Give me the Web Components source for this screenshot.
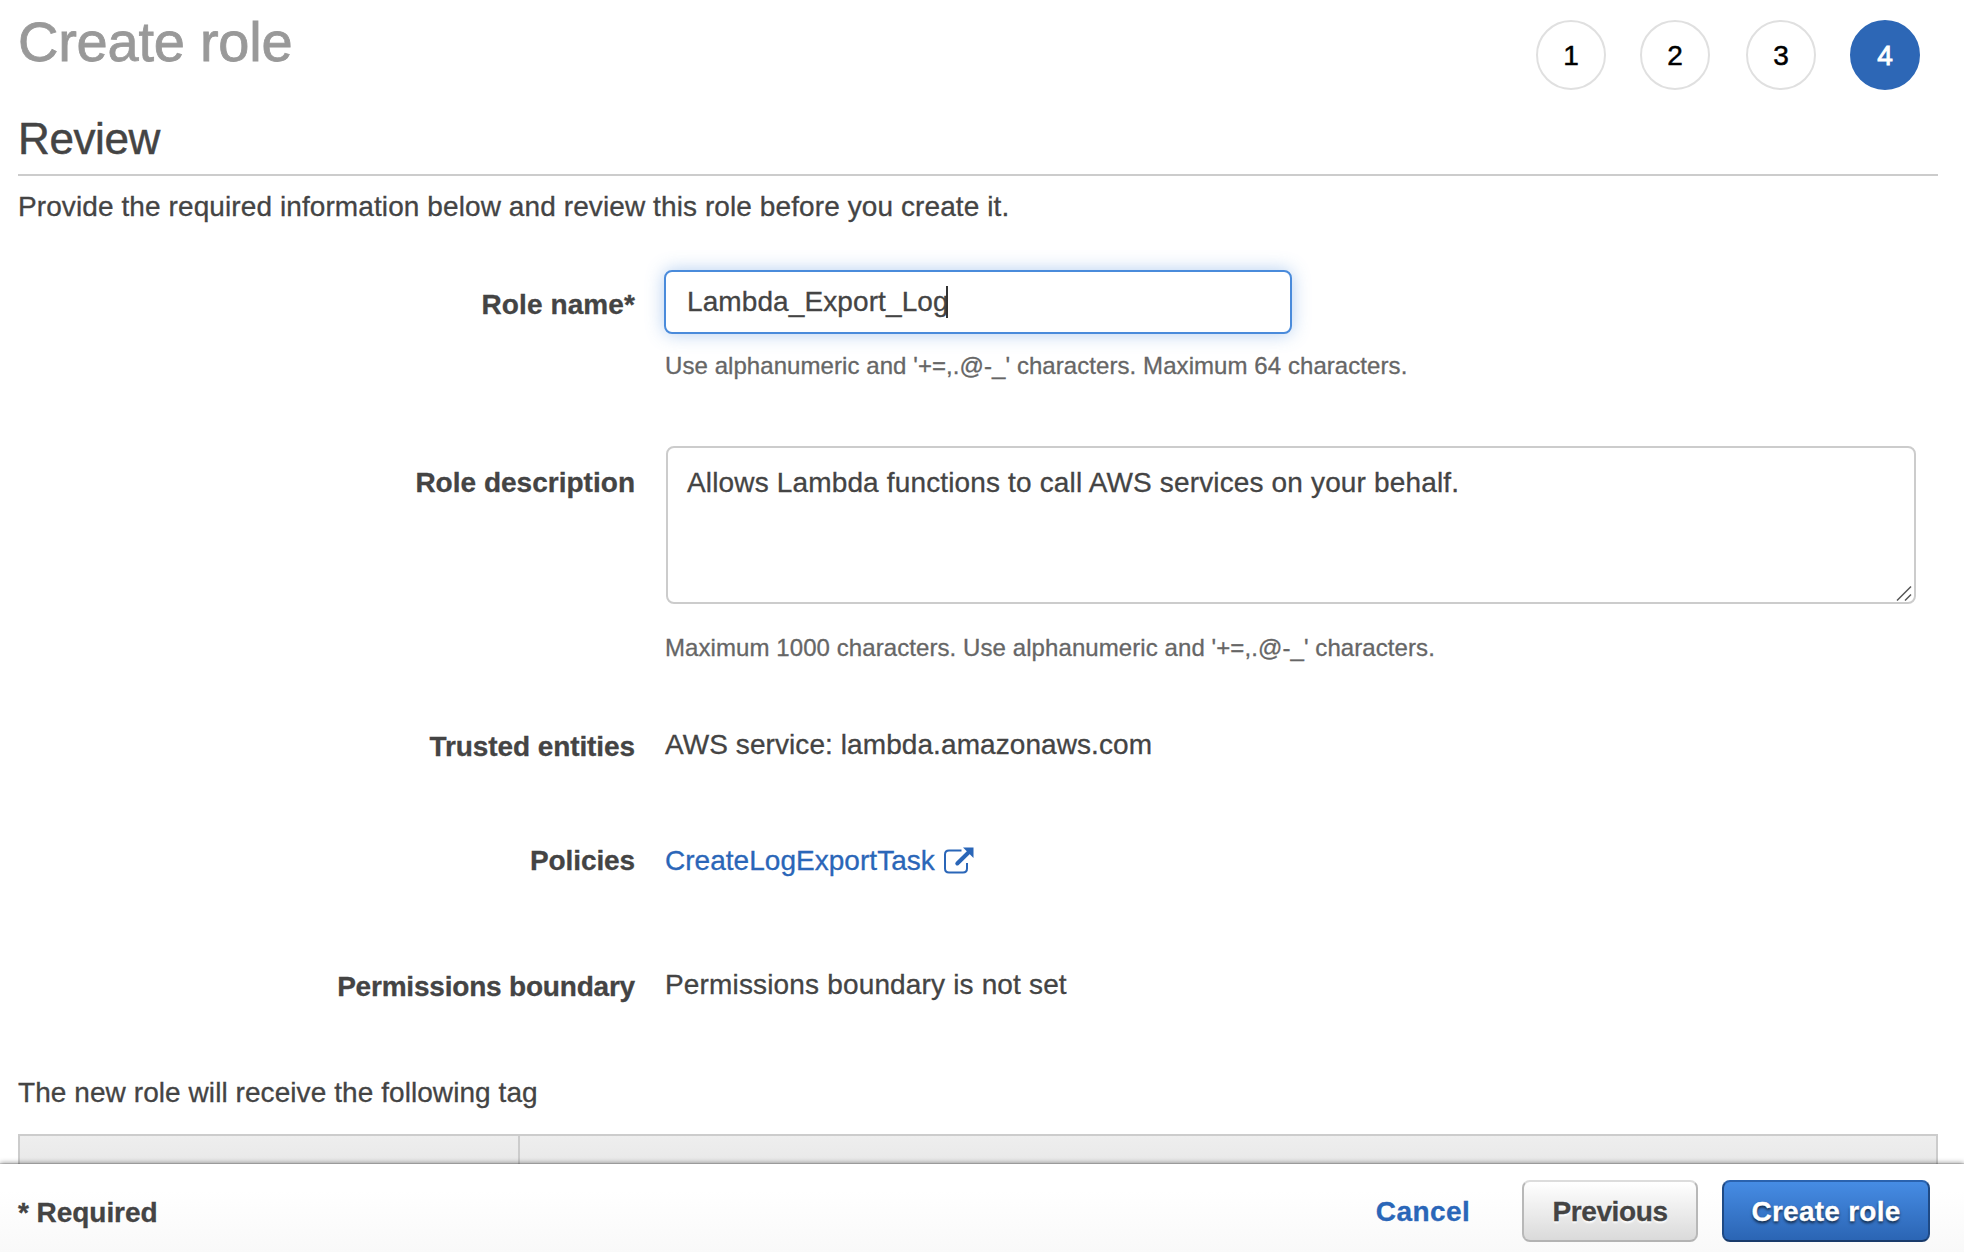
<!DOCTYPE html>
<html lang="en">
<head>
<meta charset="utf-8">
<title>Create role</title>
<style>
  html, body { margin: 0; height: 100%; background: #fff; overflow: hidden; }
  body { font-family: "Liberation Sans", Arial, sans-serif; font-size: 28px; line-height: 40px; color: #444; -webkit-text-stroke: .3px; }
</style>
</head>
<body>
<iam-create-role></iam-create-role>
<script>
const define = (name, html) => {
  const tpl = document.createElement('template');
  tpl.innerHTML = html;
  customElements.define(name, class extends HTMLElement {
    constructor() {
      super();
      this.attachShadow({ mode: 'open' }).append(tpl.content.cloneNode(true));
    }
  });
};

define('step-dot', `
<style>
  :host { box-sizing: border-box; width: 70px; height: 70px; border: 2px solid #e0e0e0; border-radius: 50%;
    display: flex; align-items: center; justify-content: center; color: #000; padding-top: 1px; -webkit-text-stroke: .5px; }
  :host([active]) { background: #2d67b6; border-color: #2d67b6; color: #fff; -webkit-text-stroke: .9px; }
</style><slot></slot>`);

define('wizard-header', `
<style>
  :host { display: flex; justify-content: space-between; align-items: flex-start; height: 108px; }
  h1 { margin: 12px 0 0; font-size: 56px; line-height: 60px; font-weight: 400; color: #999; letter-spacing: -.24px; -webkit-text-stroke: .8px; }
  nav { display: flex; gap: 34px; margin: 20px 18px 0 0; }
  step-dot:nth-child(3) { margin-left: 2px; }
</style>
<h1><slot></slot></h1>
<nav><step-dot>1</step-dot><step-dot>2</step-dot><step-dot>3</step-dot><step-dot active>4</step-dot></nav>`);

define('section-title', `
<style>
  :host { display: block; border-bottom: 2px solid #ccc; padding: 1px 0 5px; }
  h2 { margin: 0; font-size: 44px; line-height: 60px; font-weight: 400; letter-spacing: -.4px; -webkit-text-stroke: .5px; }
</style><h2><slot></slot></h2>`);

define('form-row', `
<style>
  :host { display: flex; align-items: flex-start; gap: 30px; }
  .label { width: 617px; padding-top: var(--label-offset, 2px); text-align: right; font-weight: 700; letter-spacing: var(--label-ls, 0); }
  .control { flex: 1; min-width: 0; }
</style>
<div class="label"><slot name="label"></slot></div>
<div class="control"><slot></slot></div>`);

define('text-field', `
<style>
  :host { box-sizing: border-box; display: flex; align-items: center; width: 628px; height: 64px; margin-left: -1px;
    border: 2px solid #4a8bdb; border-radius: 8px; padding: 0 20px 0 21px; background: #fff; letter-spacing: .1px;
    box-shadow: 0 0 18px rgba(74,139,219,.42); }
  i { width: 2px; height: 32px; margin: -1px 0 0 -3px; background: #333; }
</style><slot></slot><i></i>`);

define('text-area', `
<style>
  :host { box-sizing: border-box; display: flex; justify-content: space-between; width: 1250px; height: 158px; margin-left: 1px;
    border: 2px solid #ccc; border-radius: 8px; padding: 15px 2px 1px 19px; background: #fff; letter-spacing: .15px; }
  svg { align-self: flex-end; }
</style><div><slot></slot></div>
<svg width="16" height="16" viewBox="0 0 16 16" fill="none" stroke="#555" stroke-width="1.5"><path d="M1 15.500 15 1.500M9 15.500 15 9.500"/></svg>`);

define('help-text', `
<style>
  :host { display: block; font-size: 24px; line-height: 40px; color: #666; }
</style><slot></slot>`);

define('policy-link', `
<style>
  :host { display: flex; align-items: flex-start; gap: 9px; color: #2a66b8; letter-spacing: .03px; }
  svg { margin-top: 6px; }
</style><span><slot></slot></span>
<svg width="30" height="28" viewBox="0 0 30 28" fill="none" stroke="#2a66b8" stroke-width="2">
  <path d="M17.500 3.500H5Q1 3.500 1 7.500v14q0 4 4 4h14q4 0 4-4v-5.500"/>
  <path d="M13.300 16.500 24.500 5.500" stroke-width="4" stroke-linecap="round"/>
  <path d="M19 0.500H29.500V11Z" fill="#2a66b8" stroke="none"/>
</svg>`);

define('tag-table', `
<style>
  :host { box-sizing: border-box; display: grid; grid-template-columns: 500px 1fr; height: 64px; border: 2px solid #ccc;
    background: linear-gradient(#eee, #e2e2e2); }
  .key { border-right: 2px solid #ccc; }
</style><div class="key"></div><div class="value"></div>`);

define('aws-button', `
<style>
  :host { box-sizing: border-box; height: 62px; display: flex; align-items: center; justify-content: center; padding-top: 2px;
    border: 2px solid; border-color: #dcdcdc #b8b8b8 #b3b3b3; border-radius: 8px; font-weight: 700;
    background: linear-gradient(#fff, #dadada); text-shadow: 0 2px 2px #fff; color: #444; }
  :host([kind="primary"]) { border-color: #2a62ae #1f4a85 #183a6a; background: linear-gradient(#468ce4, #2b65b4); color: #fff;
    text-shadow: 0 2px 3px rgba(0,0,0,.7); }
  :host([kind="link"]) { border-color: transparent; background: none; color: #2a66b8; text-shadow: none; }
</style><slot></slot>`);

define('wizard-footer', `
<style>
  :host { box-sizing: border-box; position: relative; display: flex; align-items: flex-start; justify-content: space-between;
    height: 88px; padding: 16px 34px 0 18px; background: linear-gradient(#fff 30%, #f9f9f9);
    box-shadow: 0 -1px 0 rgba(0,0,0,.12), 0 -1px 5px rgba(0,0,0,.42); }
  .note { padding-top: 13px; font-weight: 700; letter-spacing: -.05px; }
  .actions { display: flex; }
  .cancel { width: 96px; letter-spacing: .45px; margin-right: 51px; }
  .prev { width: 176px; letter-spacing: -.38px; margin-right: 24px; }
  .create { width: 208px; letter-spacing: .25px; }
</style>
<div class="note">* Required</div>
<div class="actions">
  <aws-button class="cancel" kind="link">Cancel</aws-button>
  <aws-button class="prev">Previous</aws-button>
  <aws-button class="create" kind="primary">Create role</aws-button>
</div>`);

define('iam-create-role', `
<style>
  :host { display: flex; flex-direction: column; height: 1252px; }
  main { flex: 1; min-height: 0; overflow: hidden; padding: 0 26px 0 18px; display: flex; flex-direction: column; }
  main > * { flex-shrink: 0; }
  p { margin: 0; }
  .intro { box-sizing: border-box; padding-top: 11px; height: 94px; letter-spacing: .095px; }
  .name { height: 176px; --label-offset: 15px; --label-ls: .1px; }
  .name help-text { margin-top: 12px; letter-spacing: .07px; }
  .desc { height: 279px; --label-offset: 17px; --label-ls: .016px; }
  .desc help-text { margin-top: 24px; letter-spacing: .08px; }
  .trusted { height: 116px; --label-ls: -.09px; letter-spacing: .08px; }
  .policies { height: 124px; --label-offset: 0px; --label-ls: -.11px; }
  .boundary { height: 108px; --label-ls: -.2px; letter-spacing: .16px; }
  .tags { height: 61px; letter-spacing: .07px; }
</style>
<main>
  <wizard-header>Create role</wizard-header>
  <section-title>Review</section-title>
  <p class="intro">Provide the required information below and review this role before you create it.</p>
  <form-row class="name"><span slot="label">Role name*</span>
    <text-field>Lambda_Export_Log</text-field>
    <help-text>Use alphanumeric and '+=,.@-_' characters. Maximum 64 characters.</help-text>
  </form-row>
  <form-row class="desc"><span slot="label">Role description</span>
    <text-area>Allows Lambda functions to call AWS services on your behalf.</text-area>
    <help-text>Maximum 1000 characters. Use alphanumeric and '+=,.@-_' characters.</help-text>
  </form-row>
  <form-row class="trusted"><span slot="label">Trusted entities</span>AWS service: lambda.amazonaws.com</form-row>
  <form-row class="policies"><span slot="label">Policies</span><policy-link>CreateLogExportTask</policy-link></form-row>
  <form-row class="boundary"><span slot="label">Permissions boundary</span>Permissions boundary is not set</form-row>
  <p class="tags">The new role will receive the following tag</p>
  <tag-table></tag-table>
</main>
<wizard-footer></wizard-footer>`);
</script>
</body>
</html>
